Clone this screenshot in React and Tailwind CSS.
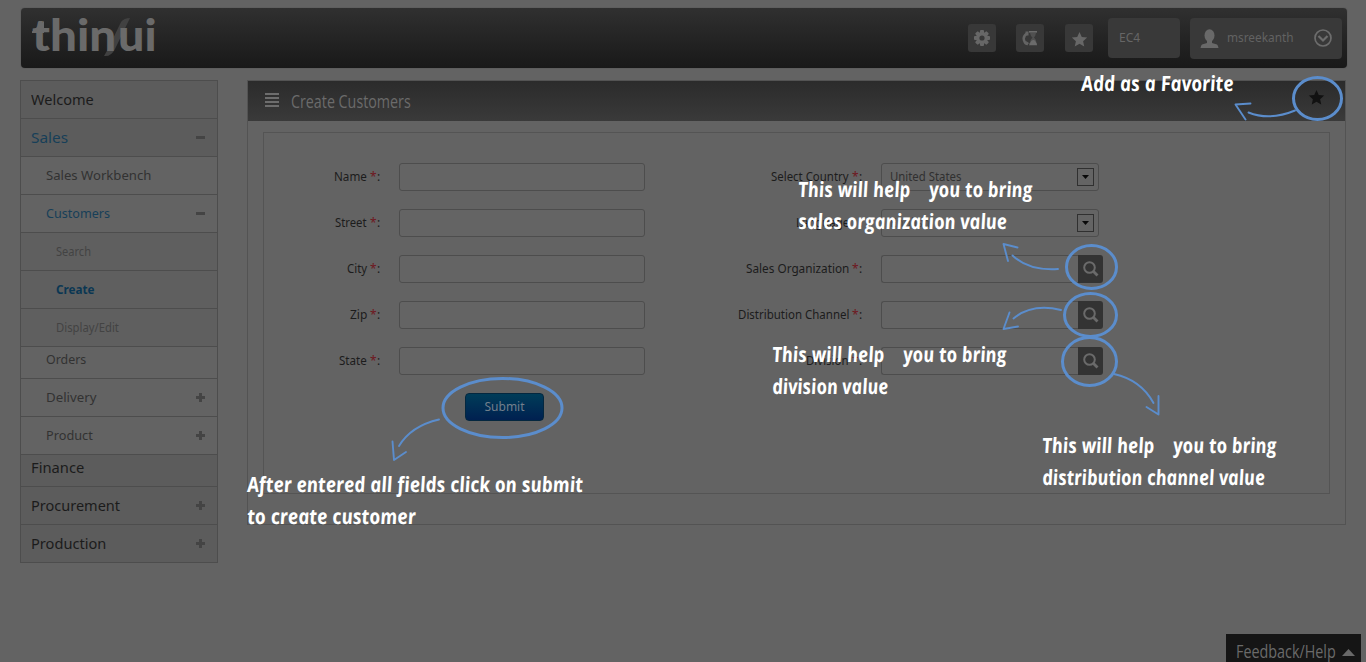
import React, { useLayoutEffect, useRef, useState } from "react";

// Text stretched horizontally to the width of its box.
function Fit({ className = "", children, upright = false }) {
  const box = useRef(null);
  const inner = useRef(null);
  const [scale, setScale] = useState(1);
  useLayoutEffect(() => {
    const measure = () => setScale(box.current.clientWidth / inner.current.offsetWidth);
    measure();
    document.fonts?.ready.then(measure);
  }, []);
  return (
    <span ref={box} className={`block shrink-0 ${className}`}>
      <span
        ref={inner}
        className="inline-block origin-left whitespace-pre align-top"
        style={{ transform: `${upright ? "skewX(7deg) " : ""}scaleX(${scale})` }}
      >
        {children}
      </span>
    </span>
  );
}

const STAR = "M12 1.5l3.2 7 7.6.8-5.7 5.1 1.6 7.5L12 18.100l-6.700 3.800 1.600-7.500L1.200 9.300l7.600-.8z";

const top = "h-[38px] bg-[#5c5c5c] pl-[10px] text-[15px] text-[#1b1b1b]";
const mid = "h-[38px] pl-[25px] text-[13px] text-[#323232]";
const sub = "h-[38px] bg-[#5f5f5f] pl-[35px] text-[12px] text-[#434343]";
const menu = [
  { t: "Welcome", w: "w-[63px]", c: top },
  { t: "Sales", w: "w-[37px]", c: "h-[38px] bg-[#5c5c5c] pl-[10px] text-[15px] text-[#173f58]", s: "minus" },
  { t: "Sales Workbench", w: "w-[105px]", c: mid },
  { t: "Customers", w: "w-[64px]", c: "h-[38px] pl-[25px] text-[13px] text-[#173f58]", s: "minus" },
  { t: "Search", w: "w-[35px]", c: sub },
  { t: "Create", w: "w-[39px]", c: "h-[38px] bg-[#5f5f5f] pl-[35px] text-[12px] font-bold text-[#0b3753]" },
  { t: "Display/Edit", w: "w-[63px]", c: sub },
  { t: "Orders", w: "w-[40px]", c: "h-[32px] pb-[6px] pl-[25px] text-[13px] text-[#323232]" },
  { t: "Delivery", w: "w-[50px]", c: mid, s: "plus" },
  { t: "Product", w: "w-[47px]", c: mid, s: "plus" },
  { t: "Finance", w: "w-[53px]", c: "h-[32px] bg-[#5c5c5c] pb-[6px] pl-[10px] text-[15px] text-[#1b1b1b]" },
  { t: "Procurement", w: "w-[89px]", c: top, s: "plus" },
  { t: "Production", w: "w-[75px]", c: top, s: "plus" },
];

function Sign({ kind }) {
  return (
    <svg width="9" height="9" viewBox="0 0 9 9" fill="#444" className="mr-[12px] ml-auto">
      <rect x="0" y="3" width="9" height="3" />
      {kind === "plus" && <rect x="3" y="0" width="3" height="9" />}
    </svg>
  );
}

function Label({ children, w, star = true }) {
  return (
    <div className="mr-[18px] flex flex-1 justify-end text-[12px] leading-[28px] text-[#1c1c1c]">
      <Fit className={w}>{children}</Fit>
      <span className="ml-[3px] w-[7px] text-[12px] text-[#6f1620]">{star ? "*" : ""}</span>
      <span className="w-[4px]">:</span>
    </div>
  );
}

const field = "h-[28px] rounded-[3px] border border-[#4d4d4d] bg-[#646464]";

function Select({ children, w, color = "text-[#303030]" }) {
  return (
    <div className={`${field} flex w-[218px] items-center pr-[4px] pl-[8px] text-[12px] ${color}`}>
      <Fit className={w}>{children}</Fit>
      <div className="ml-auto flex h-[18px] w-[17px] items-center justify-center border border-[#303030]">
        <svg width="7" height="4" viewBox="0 0 7 4"><path d="M0 0h7L3.500 4z" fill="#090909" /></svg>
      </div>
    </div>
  );
}

function Lookup() {
  return (
    <div className="flex w-[222px]">
      <div className={`${field} flex-1 rounded-r-none border-r-0`} />
      <div className="flex h-[28px] w-[25px] items-center justify-center rounded-r-[3px] bg-[#333]">
        <svg width="17" height="17" viewBox="0 0 17 17" fill="none" stroke="#6a6a6a">
          <circle cx="7.500" cy="6.500" r="5.300" strokeWidth="2" />
          <path d="M11.500 10.500l4 4" strokeWidth="2.800" />
        </svg>
      </div>
    </div>
  );
}

const left = [["Name", "w-[33px]"], ["Street", "w-[32px]"], ["City", "w-[20px]"], ["Zip", "w-[17px]"], ["State", "w-[28px]"]];

const note = "h-[31.500px]";

export default function App() {
  return (
    <div className="relative flex h-[662px] w-[1366px] flex-col overflow-hidden bg-[#636363] pt-[8px] font-['Noto_Sans','Open_Sans',sans-serif]">
      <header className="ml-[21px] flex h-[60px] w-[1326px] shrink-0 items-center rounded-[4px] bg-linear-to-b from-[#303030] to-[#191919] pr-[5px] pl-[11px] shadow-[0_0_1px_#333]">
        <div className="relative flex h-[60px] items-start font-['Lato',sans-serif] text-[43px] leading-[54px] font-black text-[#6a6a6a]">
          <svg width="28" height="40" viewBox="0 0 28 40" className="absolute top-[10px] left-[71px]">
            <path d="M18 4Q21 0 27 0L12 31Q8 39 1 38L5 31Z" fill="#414141" />
          </svg>
          <svg width="14" height="13" viewBox="0 0 14 13" className="absolute top-[13px] left-0">
            <path d="M12 0V12H0V10.500Z" fill="#6a6a6a" />
          </svg>
          <Fit className="relative w-[84px]">thin</Fit>
          <Fit className="relative ml-[2px] w-[39px]">ui</Fit>
        </div>
        <div className="ml-auto flex items-center">
          <div className="mr-[20px] flex size-[28px] items-center justify-center rounded-[3px] bg-[#383838]">
            <svg width="18" height="18" viewBox="-9 -9 18 18" fill="#676767">
              {[0, 45, 90, 135].map((a) => (
                <rect key={a} x="-2" y="-8" width="4" height="16" rx="1" transform={`rotate(${a})`} />
              ))}
              <circle r="6" />
              <circle r="2.600" fill="#383838" />
            </svg>
          </div>
          <div className="mr-[21px] flex size-[28px] items-center justify-center rounded-[3px] bg-[#383838]">
            <svg width="16" height="16" viewBox="0 0 16 16">
              <path d="M5.500 3Q0 6.500 2.500 11.500Q3.500 14 5.500 14" fill="none" stroke="#646464" strokeWidth="2.500" />
              <path d="M3.500 1.500h3v4h-3zM4 11l3 2-2 2.500z" fill="#646464" />
              <path d="M7 1h8v2h-1Q13.500 6 12 7.500 14 9 14.500 13H15v2.500H7V13h1Q8.500 9 10.500 7.500 8.500 6 8 3H7z" fill="#505050" />
              <path d="M7.500 15q1-4.500 3.500-5t4 5zM7 1h8v1.300H7z" fill="#6b6b6b" />
            </svg>
          </div>
          <div className="mr-[15px] flex size-[28px] items-center justify-center rounded-[3px] bg-[#383838] pt-[3px]">
            <svg width="17" height="17" viewBox="0 0 24 24" fill="#676767"><path d={STAR} /></svg>
          </div>
          <div className="mr-[10px] flex h-[40px] w-[72px] items-center rounded-[4px] bg-[#393939] pl-[11px] text-[12px] text-[#666]">
            <Fit className="w-[21px]">EC4</Fit>
          </div>
          <div className="flex h-[41px] w-[152px] items-center rounded-[4px] bg-[#393939] pr-[10px] pl-[10px] text-[12px] text-[#626262]">
            <svg width="19" height="19" viewBox="0 0 19 19" fill="#696969">
              <ellipse cx="9.500" cy="6.500" rx="5" ry="6.300" />
              <path d="M7 11h5v3l5 1.500Q18 16 18.500 19H.500Q1 16 2 15.500L7 14z" />
            </svg>
            <Fit className="ml-[8px] w-[67px]">msreekanth</Fit>
            <svg width="18" height="18" viewBox="0 0 18 18" fill="none" stroke="#6d6d6d" className="ml-auto">
              <circle cx="9" cy="9" r="8" strokeWidth="1.700" />
              <path d="M4.500 7l4.500 4.500L13.500 7" strokeWidth="2.200" />
            </svg>
          </div>
        </div>
      </header>

      <div className="mt-[12px] flex items-start">
        <nav className="ml-[20px] w-[198px] border border-b-0 border-[#4d4d4d]">
          {menu.map((m) => (
            <div key={m.t} className={`flex items-center border-b border-[#4d4d4d] ${m.c}`}>
              <Fit className={m.w}>{m.t}</Fit>
              {m.s && <Sign kind={m.s} />}
            </div>
          ))}
        </nav>

        <main className="ml-[29px] h-[445px] w-[1099px] border border-[#535353]">
          <div className="flex h-[40px] items-center bg-linear-to-b from-[#2b2b2b] to-[#3a3a3a] pl-[17px]">
            <svg width="14" height="14" viewBox="0 0 14 14" fill="#6d6d6d" className="mb-[3px]">
              {[0, 4, 8, 12].map((y) => <rect key={y} y={y} width="14" height="2" />)}
            </svg>
            <div className="mt-[1px] ml-[12px] font-['Open_Sans',sans-serif] text-[17.5px] font-medium text-[#6b6b6b]">
              <Fit className="w-[120px]">Create Customers</Fit>
            </div>
            <svg width="17" height="17" viewBox="0 0 24 24" fill="#111" className="mr-[20px] mb-[8px] ml-auto">
              <path d={STAR} />
            </svg>
          </div>

          <div className="mt-[11px] ml-[15px] flex h-[362px] w-[1067px] border border-[#545454] pt-[30px]">
            <div className="flex w-[381px] flex-col gap-[18px]">
              {left.map(([t, w]) => (
                <div key={t} className="flex">
                  <Label w={w}>{t}</Label>
                  <div className={`${field} w-[246px]`} />
                </div>
              ))}
              <button className="ml-[201px] flex h-[28px] w-[79px] items-center justify-center rounded-[4px] border border-[#04273f] bg-linear-to-b from-[#003c58] to-[#002050] text-[12px] text-[#727f8c]">
                <Fit className="w-[40px]">Submit</Fit>
              </button>
            </div>
            <div className="ml-[86px] flex w-[372px] flex-col gap-[18px]">
              <div className="flex w-[368px]"><Label w="w-[78px]">Select Country</Label><Select w="w-[71px]">United States</Select></div>
              <div className="flex w-[368px]"><Label w="w-[53px]" star={false}>Language</Label><Select w="w-[40px]" color="text-[#4a4a4a]">English</Select></div>
              <div className="flex"><Label w="w-[103px]">Sales Organization</Label><Lookup /></div>
              <div className="flex"><Label w="w-[111px]">Distribution Channel</Label><Lookup /></div>
              <div className="flex"><Label w="w-[43px]">Division</Label><Lookup /></div>
            </div>
          </div>
        </main>
      </div>

      <div className="mt-auto ml-[1226px] flex h-[28px] w-[135px] items-center bg-[#151515] pt-[6px] pl-[10px] font-['Open_Sans',sans-serif] text-[17.5px] font-medium text-[#6a6a6a]">
        <Fit className="w-[100px]">Feedback/Help</Fit>
        <svg width="13" height="7" viewBox="0 0 13 7" className="mt-[2px] ml-[6px]"><path d="M6.500 0L13 7H0z" fill="#696969" /></svg>
      </div>

      <div className="pointer-events-none absolute inset-0 font-['Open_Sans',sans-serif] text-[21px] leading-[31px] font-bold text-white italic">
        <svg width="1366" height="662" viewBox="0 0 1366 662" fill="none" stroke="#5b8dcc" className="absolute inset-0">
          <g strokeWidth="3">
            <ellipse cx="1317.500" cy="98.500" rx="24" ry="21" />
            <ellipse cx="1091.500" cy="267" rx="25" ry="21.500" />
            <ellipse cx="1090.500" cy="315" rx="26" ry="21.500" />
            <ellipse cx="1089.500" cy="361.500" rx="27" ry="24" />
            <ellipse cx="502.500" cy="408" rx="59.500" ry="29.500" />
          </g>
          <g strokeWidth="1.900" strokeLinecap="round" strokeLinejoin="round">
            <path d="M1295 110.500Q1270 121 1248.500 112.500M1250.500 103.500L1235.500 104.500L1245.500 119.500" />
            <path d="M1058 269Q1029 271 1012.500 255.500M1017.500 247.500L1003.500 244L1008 261" />
            <path d="M1061 310Q1032 303 1013.500 318.500M1009.500 312.500L1003.500 329L1018 326.500" />
            <path d="M1114 374Q1141 380 1153.500 403M1158.500 396L1158.500 414.500L1146.500 407" />
            <path d="M439 419.500Q411 426 399 446M392.500 441.500L394 460L406 452" />
          </g>
        </svg>
        <div className="absolute top-[68px] left-[1081px]"><Fit upright className="w-[152px]">Add as a Favorite</Fit></div>
        <div className="absolute top-[174px] left-[798px]">
          <div className={`flex gap-[19px] ${note}`}><Fit upright className="w-[112px]">This will help</Fit><Fit upright className="w-[103px]">you to bring</Fit></div>
          <Fit upright className="w-[209px]">sales organization value</Fit>
        </div>
        <div className="absolute top-[339px] left-[772px]">
          <div className={`flex gap-[19px] ${note}`}><Fit upright className="w-[112px]">This will help</Fit><Fit upright className="w-[103px]">you to bring</Fit></div>
          <Fit upright className="w-[116px]">division value</Fit>
        </div>
        <div className="absolute top-[430px] left-[1042px]">
          <div className={`flex gap-[19px] ${note}`}><Fit upright className="w-[112px]">This will help</Fit><Fit upright className="w-[103px]">you to bring</Fit></div>
          <Fit upright className="w-[223px]">distribution channel value</Fit>
        </div>
        <div className="absolute top-[469px] left-[247px]">
          <div className={note}><Fit upright className="w-[336px]">After entered all fields click on submit</Fit></div>
          <Fit upright className="w-[168px]">to create customer</Fit>
        </div>
      </div>
    </div>
  );
}
